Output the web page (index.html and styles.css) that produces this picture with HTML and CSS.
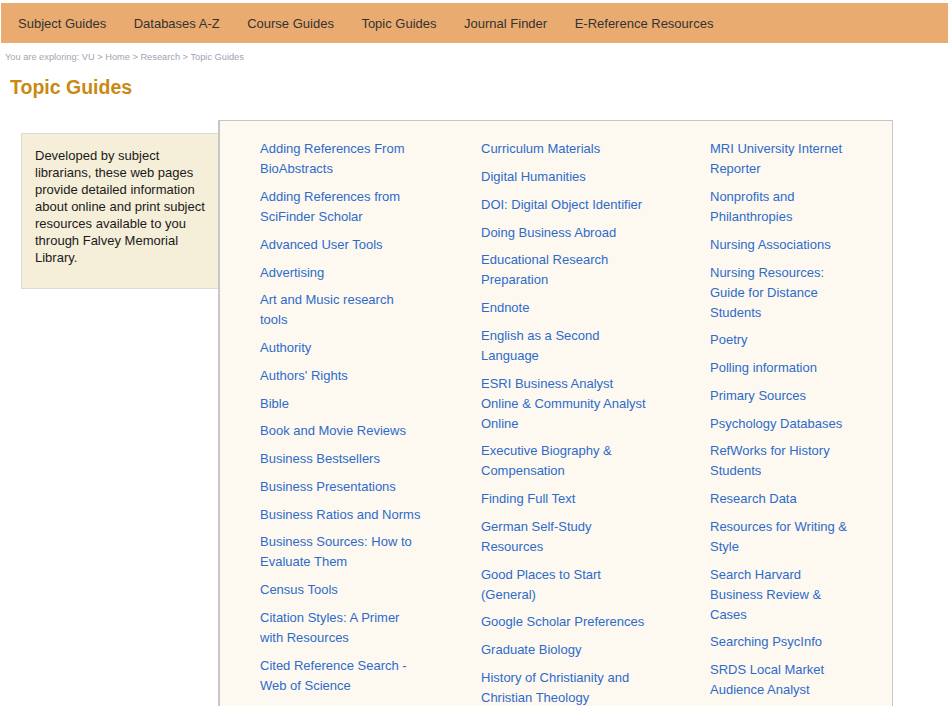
FILE: index.html
```html
<!DOCTYPE html>
<html lang="en">
<head>
<meta charset="utf-8">
<title>Topic Guides</title>
<link rel="stylesheet" href="styles.css">
</head>
<body>
<div class="page">
  <nav class="topnav">
    <ul>
      <li><a href="#">Subject Guides</a></li>
      <li><a href="#">Databases A-Z</a></li>
      <li><a href="#">Course Guides</a></li>
      <li><a href="#">Topic Guides</a></li>
      <li><a href="#">Journal Finder</a></li>
      <li><a href="#">E-Reference Resources</a></li>
    </ul>
  </nav>
  <div class="breadcrumb">You are exploring: <a href="#">VU</a> &gt; <a href="#">Home</a> &gt; <a href="#">Research</a> &gt; <span>Topic Guides</span></div>
  <h1 class="title">Topic Guides</h1>
  <div class="content">
    <div class="intro">Developed by subject librarians, these web pages provide detailed information about online and print subject resources available to you through Falvey Memorial Library.</div>
    <div class="guides">
      <ul>
        <li><a href="#">Adding References From BioAbstracts</a></li>
        <li><a href="#">Adding References from SciFinder Scholar</a></li>
        <li><a href="#">Advanced User Tools</a></li>
        <li><a href="#">Advertising</a></li>
        <li><a href="#">Art and Music research tools</a></li>
        <li><a href="#">Authority</a></li>
        <li><a href="#">Authors' Rights</a></li>
        <li><a href="#">Bible</a></li>
        <li><a href="#">Book and Movie Reviews</a></li>
        <li><a href="#">Business Bestsellers</a></li>
        <li><a href="#">Business Presentations</a></li>
        <li><a href="#">Business Ratios and Norms</a></li>
        <li><a href="#">Business Sources: How to Evaluate Them</a></li>
        <li><a href="#">Census Tools</a></li>
        <li><a href="#">Citation Styles: A Primer with Resources</a></li>
        <li><a href="#">Cited Reference Search - Web of Science</a></li>
      </ul>
      <ul>
        <li><a href="#">Curriculum Materials</a></li>
        <li><a href="#">Digital Humanities</a></li>
        <li><a href="#">DOI: Digital Object Identifier</a></li>
        <li><a href="#">Doing Business Abroad</a></li>
        <li><a href="#">Educational Research Preparation</a></li>
        <li><a href="#">Endnote</a></li>
        <li><a href="#">English as a Second Language</a></li>
        <li><a href="#">ESRI Business Analyst Online &amp; Community Analyst Online</a></li>
        <li><a href="#">Executive Biography &amp; Compensation</a></li>
        <li><a href="#">Finding Full Text</a></li>
        <li><a href="#">German Self-Study Resources</a></li>
        <li><a href="#">Good Places to Start (General)</a></li>
        <li><a href="#">Google Scholar Preferences</a></li>
        <li><a href="#">Graduate Biology</a></li>
        <li><a href="#">History of Christianity and Christian Theology</a></li>
      </ul>
      <ul>
        <li><a href="#">MRI University Internet Reporter</a></li>
        <li><a href="#">Nonprofits and Philanthropies</a></li>
        <li><a href="#">Nursing Associations</a></li>
        <li><a href="#">Nursing Resources: Guide for Distance Students</a></li>
        <li><a href="#">Poetry</a></li>
        <li><a href="#">Polling information</a></li>
        <li><a href="#">Primary Sources</a></li>
        <li><a href="#">Psychology Databases</a></li>
        <li><a href="#">RefWorks for History Students</a></li>
        <li><a href="#">Research Data</a></li>
        <li><a href="#">Resources for Writing &amp; Style</a></li>
        <li><a href="#">Search Harvard Business Review &amp; Cases</a></li>
        <li><a href="#">Searching PsycInfo</a></li>
        <li><a href="#">SRDS Local Market Audience Analyst</a></li>
      </ul>
    </div>
  </div>
</div>
</body>
</html>
```

FILE: styles.css
```css
html, body {
  margin: 0;
  padding: 0;
  background: #ffffff;
}

body {
  font-family: "Liberation Sans", Arial, sans-serif;
  color: #1a1a1a;
}

.page {
  padding-top: 3px;
}

.topnav {
  margin-left: 1px;
  background: #eaab70;
  height: 40px;
}

.topnav ul {
  list-style: none;
  margin: 0;
  padding: 0 0 0 3.25px;
  display: flex;
}

.topnav li a {
  display: block;
  padding: 2px 13.75px 0;
  line-height: 38px;
  font-size: 13px;
  color: #333333;
  text-decoration: none;
}

.breadcrumb {
  margin-top: 8px;
  padding-left: 5px;
  font-size: 9.25px;
  line-height: 12px;
  color: #a3a6ad;
}

.breadcrumb a,
.breadcrumb span {
  color: #9ea4b2;
  text-decoration: none;
}

.title {
  margin: 13px 0 0 10px;
  font-size: 19.5px;
  line-height: 22px;
  font-weight: bold;
  color: #c98a12;
}

.content {
  display: flex;
  align-items: flex-start;
  margin-top: 22.3px;
  padding-left: 21px;
}

.intro {
  box-sizing: border-box;
  width: 197px;
  flex: none;
  margin-top: 13px;
  padding: 13px 7px 22px 13px;
  background: #f5eed8;
  border: 1px solid #dcdad4;
  border-right: none;
  font-size: 13px;
  line-height: 17px;
  color: #1a1a1a;
}

.guides {
  box-sizing: border-box;
  width: 675px;
  flex: none;
  padding: 18px 0 24px 40px;
  background: #fdf9f1;
  border: 1px solid #c6c6c6;
  border-left-width: 2px;
  display: grid;
  grid-template-columns: 162px 170px 142px;
  column-gap: 59px;
}

.guides ul {
  list-style: none;
  margin: 0;
  padding: 0;
}

.guides li {
  font-size: 13px;
  line-height: 20px;
  margin-bottom: 7.75px;
}

.guides a {
  color: #2e6bc9;
  text-decoration: none;
}
```
